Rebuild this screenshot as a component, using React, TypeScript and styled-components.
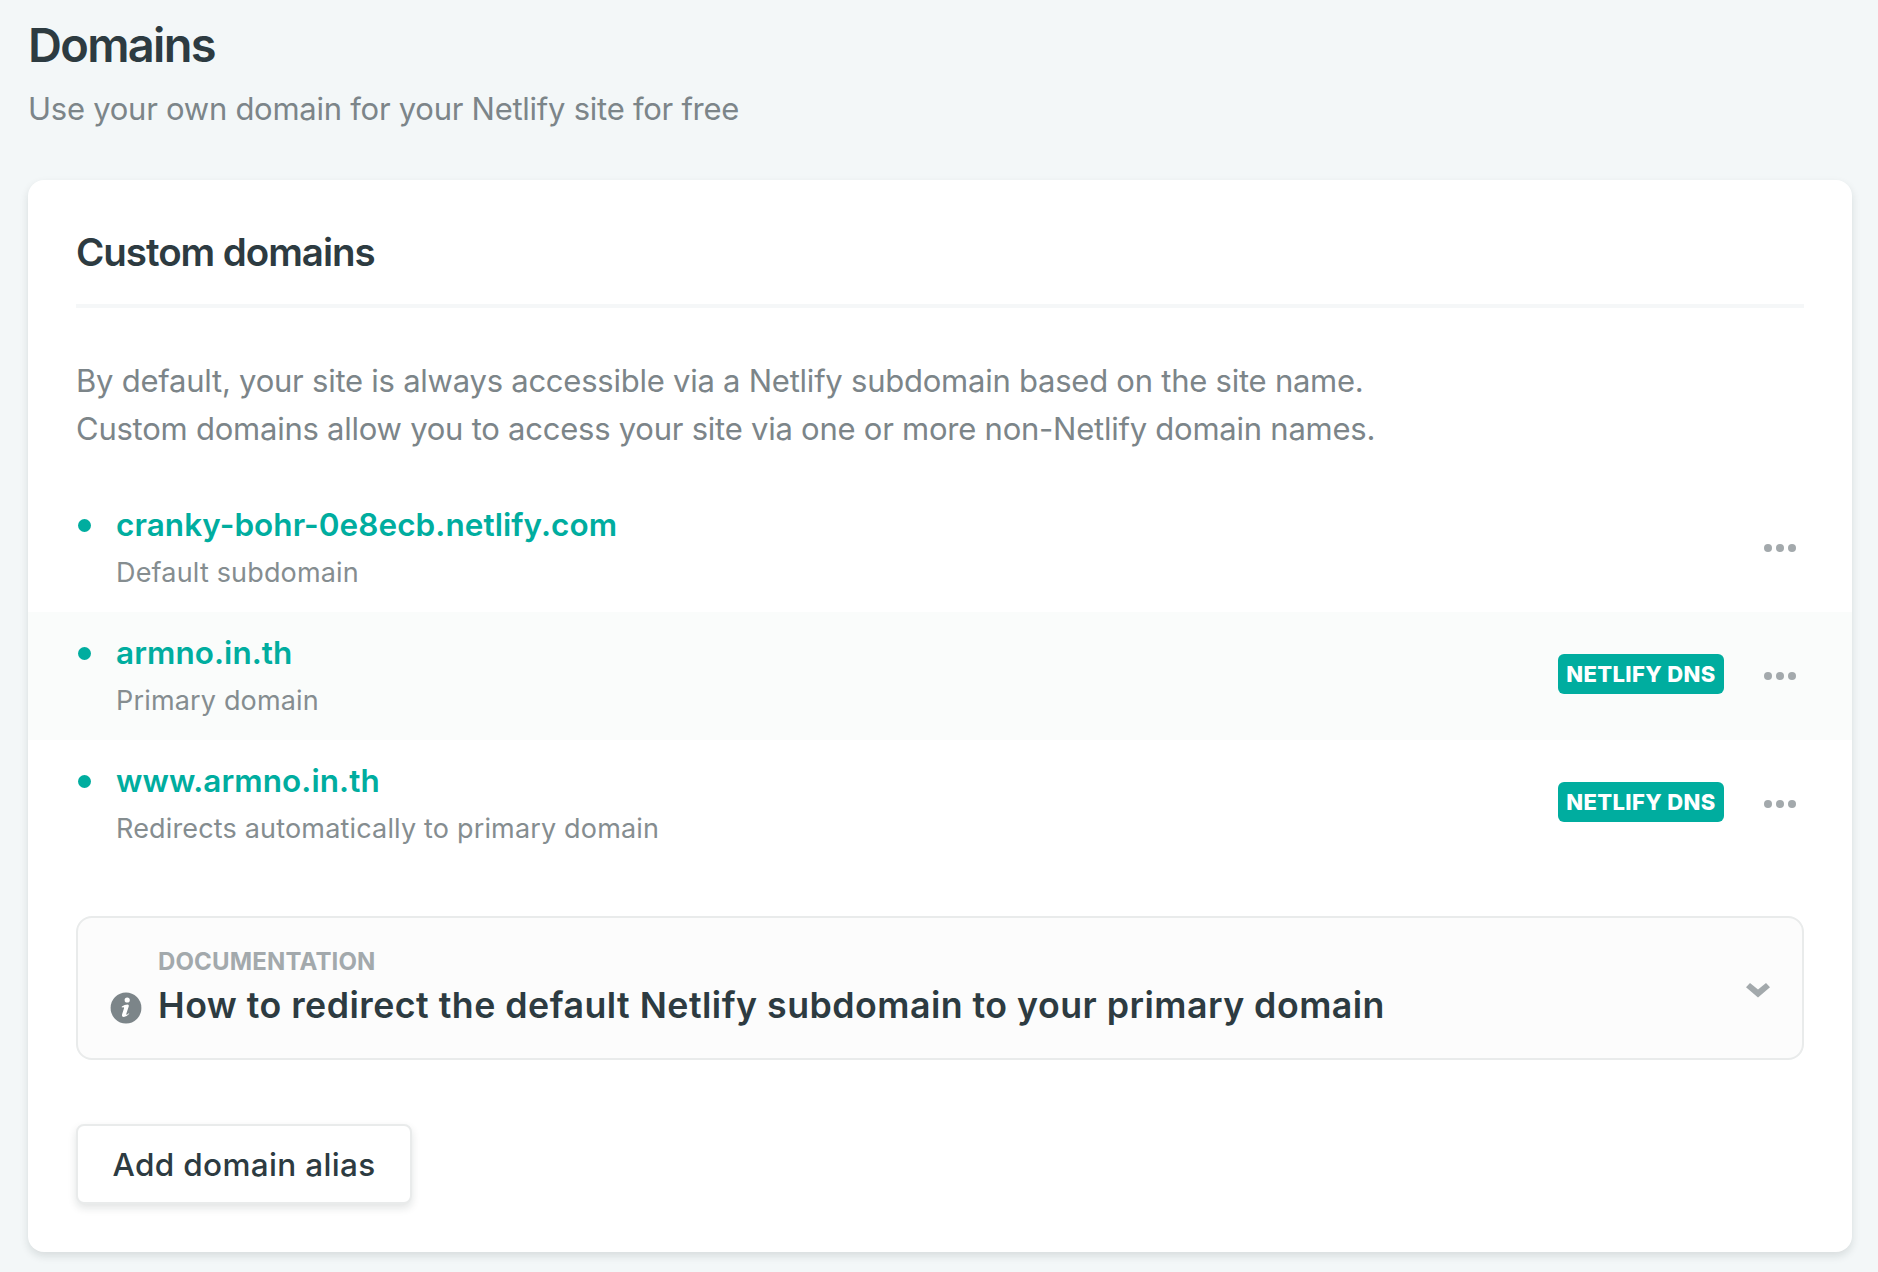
import React from "react";
import styled, { createGlobalStyle } from "styled-components";

const color = {
  page: "#f3f7f8",
  ink: "#2d3b41",
  muted: "#7c8589",
  faint: "#a3a9ac",
  teal: "#00ad9f",
  line: "#e9ebeb",
};

const GlobalStyle = createGlobalStyle`
  *, *::before, *::after { box-sizing: border-box; }
  body {
    margin: 0;
    background: ${color.page};
    color: ${color.ink};
    font-family: Inter, "Liberation Sans", sans-serif;
  }
  h1, h2, h3, p, ul { margin: 0; padding: 0; }
`;

const Page = styled.main`
  height: 1272px;
  padding: 17px 26px 0 28px;
  overflow: hidden;
`;

const PageTitle = styled.h1`
  font-size: 47px;
  line-height: 56px;
  font-weight: 600;
  letter-spacing: -1.7px;
`;

const PageSubtitle = styled.p`
  margin-top: 12px;
  font-size: 31px;
  line-height: 48px;
  letter-spacing: -0.26px;
  color: ${color.muted};
`;

const Card = styled.section`
  margin-top: 47px;
  height: 1072px;
  padding: 48px;
  background: #fff;
  border-radius: 16px;
  box-shadow: 0 4px 8px rgba(14, 30, 37, 0.12);
`;

const CardTitle = styled.h2`
  padding-bottom: 28px;
  border-bottom: 4px solid #f5f7f8;
  font-size: 38.5px;
  line-height: 48px;
  font-weight: 600;
  letter-spacing: -1.04px;
`;

const Intro = styled.p`
  margin-top: 49px;
  font-size: 31px;
  line-height: 48px;
  letter-spacing: -0.24px;
  color: ${color.muted};
  white-space: nowrap;
`;

const DomainList = styled.ul`
  margin: 31px -48px 0;
  list-style: none;
`;

const DomainRow = styled.li<{ $tinted?: boolean }>`
  display: flex;
  align-items: center;
  height: 128px;
  padding: 0 48px;
  background: ${(p) => (p.$tinted ? "#fafcfb" : "transparent")};
`;

const Bullet = styled.span`
  flex: none;
  align-self: flex-start;
  width: 13px;
  height: 13px;
  margin: 35px 25px 0 2px;
  border-radius: 50%;
  background: ${color.teal};
`;

const DomainText = styled.div`
  flex: 1;
  padding-bottom: 2px;
`;

const DomainName = styled.a`
  display: block;
  font-size: 31.5px;
  line-height: 48px;
  font-weight: 600;
  letter-spacing: 0.06px;
  color: ${color.teal};
`;

const DomainNote = styled.p`
  margin-top: 4px;
  font-size: 27px;
  line-height: 40px;
  letter-spacing: 0.17px;
  color: #858d90;
`;

const Badge = styled.span`
  display: flex;
  align-items: center;
  justify-content: center;
  width: 166px;
  height: 40px;
  margin: 0 40px 4px 0;
  border-radius: 6px;
  background: ${color.teal};
  color: #fff;
  font-size: 22px;
  font-weight: 800;
  letter-spacing: 0.37px;
  white-space: nowrap;
`;

const MoreButton = styled.button`
  display: flex;
  padding: 0;
  margin-right: 8px;
  border: 0;
  background: none;
`;

const DocPanel = styled.div`
  display: flex;
  height: 144px;
  margin-top: 48px;
  padding: 28px 32px 0;
  border: 2px solid ${color.line};
  border-radius: 16px;
  background: #fcfcfc;
`;

const DocText = styled.div`
  flex: 1;
  margin-left: 16px;
`;

const InfoIcon = styled.svg`
  flex: none;
  margin-top: 46px;
`;

const Chevron = styled.svg`
  flex: none;
  margin-top: 37px;
`;

const Eyebrow = styled.p`
  font-size: 24px;
  line-height: 32px;
  font-weight: 700;
  letter-spacing: 0.15px;
  color: ${color.faint};
`;

const DocTitle = styled.h3`
  margin-top: 3px;
  font-size: 35.75px;
  line-height: 48px;
  font-weight: 600;
  letter-spacing: 0.47px;
  white-space: nowrap;
`;

const AddButton = styled.button`
  display: block;
  width: 336px;
  height: 80px;
  margin-top: 64px;
  padding: 1px 0 0;
  border: 2px solid ${color.line};
  border-radius: 8px;
  background: #fff;
  box-shadow: 0 4px 8px rgba(14, 30, 37, 0.12);
  color: ${color.ink};
  font-family: inherit;
  font-size: 31.5px;
  line-height: 48px;
  font-weight: 500;
  letter-spacing: 0.33px;
  white-space: nowrap;
`;

const domains = [
  { name: "cranky-bohr-0e8ecb.netlify.com", note: "Default subdomain", dns: false },
  { name: "armno.in.th", note: "Primary domain", dns: true },
  { name: "www.armno.in.th", note: "Redirects automatically to primary domain", dns: true },
];

const More = () => (
  <MoreButton aria-label="Options">
    <svg width="32" height="8" viewBox="0 0 32 8" fill={color.faint}>
      <circle cx="4" cy="4" r="4" />
      <circle cx="16" cy="4" r="4" />
      <circle cx="28" cy="4" r="4" />
    </svg>
  </MoreButton>
);

export default function App() {
  return (
    <>
      <GlobalStyle />
      <Page>
        <PageTitle>Domains</PageTitle>
        <PageSubtitle>Use your own domain for your Netlify site for free</PageSubtitle>
        <Card>
          <CardTitle>Custom domains</CardTitle>
          <Intro>
            By default, your site is always accessible via a Netlify subdomain based on the site name.
            <br />
            Custom domains allow you to access your site via one or more non-Netlify domain names.
          </Intro>
          <DomainList>
            {domains.map((d, i) => (
              <DomainRow key={d.name} $tinted={i % 2 === 1}>
                <Bullet />
                <DomainText>
                  <DomainName>{d.name}</DomainName>
                  <DomainNote>{d.note}</DomainNote>
                </DomainText>
                {d.dns && <Badge>NETLIFY DNS</Badge>}
                <More />
              </DomainRow>
            ))}
          </DomainList>
          <DocPanel>
            <InfoIcon width="32" height="32" viewBox="0 0 32 32">
              <circle cx="16" cy="16" r="15.4" fill={color.muted} />
              <circle cx="17.2" cy="8" r="2.6" fill="#fff" />
              <path
                d="M11.8 14.6 Q14.6 12.8 17.6 12.6 Q19.2 12.6 18.8 14.2 L16.4 21.6 Q16 22.9 16.7 22.7 Q17.6 22.4 18.8 21.2 L19.3 21.8 Q16.8 24.8 13.8 24.9 Q11.4 24.9 12.1 22.2 L14.1 16 Q14.2 15.2 13.4 15.2 L11.8 15.5 Z"
                fill="#fff"
              />
            </InfoIcon>
            <DocText>
              <Eyebrow>DOCUMENTATION</Eyebrow>
              <DocTitle>How to redirect the default Netlify subdomain to your primary domain</DocTitle>
            </DocText>
            <Chevron width="24" height="16" viewBox="0 0 24 16">
              <path d="M0 4.2 L4 0 L12 6.4 L20 0 L24 4.2 L12 14.4 Z" fill={color.faint} />
            </Chevron>
          </DocPanel>
          <AddButton>Add domain alias</AddButton>
        </Card>
      </Page>
    </>
  );
}
